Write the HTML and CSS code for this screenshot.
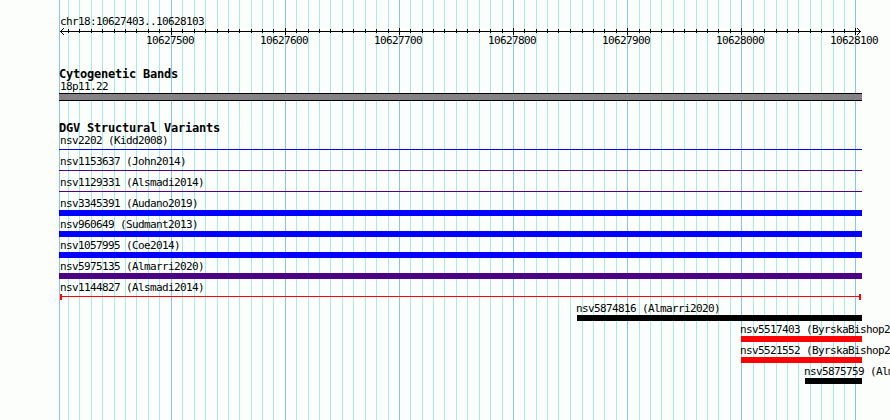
FILE: index.html
```
<!DOCTYPE html>
<html lang="en">
<head>
<meta charset="utf-8">
<title>chr18:10627403..10628103</title>
<link rel="stylesheet" href="styles.css">
</head>
<body>
<main class="browser">
  <svg class="grid" width="890" height="420" shape-rendering="crispEdges" aria-hidden="true">
    <path id="minor" class="grid-minor"/>
    <path id="major" class="grid-major"/>
  </svg>
  <header class="ruler">
    <div class="label">chr18:10627403..10628103</div>
    <svg class="axis" width="890" height="8" shape-rendering="crispEdges" aria-hidden="true">
      <path d="M60 3.5H861"/>
      <path id="ticks"/>
      <path class="arrow" d="M61 2h1v1h-1zM62 1h1v1h-1zM63 0h1v1h-1zM61 4h1v1h-1zM62 5h1v1h-1zM63 6h1v1h-1zM859 2h1v1h-1zM858 1h1v1h-1zM857 0h1v1h-1zM859 4h1v1h-1zM858 5h1v1h-1zM857 6h1v1h-1z"/>
    </svg>
    <div class="scale">
      <span>10627500</span><span>10627600</span><span>10627700</span><span>10627800</span><span>10627900</span><span>10628000</span><span>10628100</span>
    </div>
  </header>
  <section class="track cytoband">
    <h2>Cytogenetic Bands</h2>
    <div class="row"><div class="label">18p11.22</div><div class="band"></div></div>
  </section>
  <section class="track">
    <h2>DGV Structural Variants</h2>
    <div class="row"><div class="label">nsv2202 (Kidd2008)</div><div class="line blue"></div></div>
    <div class="row"><div class="label">nsv1153637 (John2014)</div><div class="line indigo"></div></div>
    <div class="row"><div class="label">nsv1129331 (Alsmadi2014)</div><div class="line indigo"></div></div>
    <div class="row"><div class="label">nsv3345391 (Audano2019)</div><div class="bar blue"></div></div>
    <div class="row"><div class="label">nsv960649 (Sudmant2013)</div><div class="bar blue"></div></div>
    <div class="row"><div class="label">nsv1057995 (Coe2014)</div><div class="bar blue"></div></div>
    <div class="row"><div class="label">nsv5975135 (Almarri2020)</div><div class="bar indigo"></div></div>
    <div class="row"><div class="label">nsv1144827 (Alsmadi2014)</div><div class="span"></div></div>
    <div class="row from-577"><div class="label">nsv5874816 (Almarri2020)</div><div class="bar black"></div></div>
    <div class="row from-741"><div class="label">nsv5517403 (ByrskaBishop2</div><div class="bar red"></div></div>
    <div class="row from-741"><div class="label">nsv5521552 (ByrskaBishop2</div><div class="bar red"></div></div>
    <div class="row from-805"><div class="label">nsv5875759 (Alm</div><div class="bar black"></div></div>
  </section>
</main>
<script src="grid.js"></script>
</body>
</html>
```
FILE: styles.css
```
body {
  margin: 0;
  background: #fcfefc;
  color: #000;
  font: 11px/13px "DejaVu Sans Mono", monospace;
  letter-spacing: -0.622px;
}
.browser {
  position: relative;
  width: 890px;
  height: 420px;
  overflow: hidden;
}
.grid { position: absolute; top: 0; left: 0; z-index: -1; }
.grid path, .axis path { fill: none; stroke-width: 1; }
.grid .grid-minor { stroke: #a9ebe9; }
.grid .grid-major { stroke: #84c8e4; }
.ruler { height: 52px; padding-top: 15px; }
.ruler .label { padding-left: 60px; }
.axis { display: block; }
.axis path { stroke: #000; }
.axis .arrow { fill: #000; stroke: none; }
.scale {
  display: grid;
  grid-template-columns: repeat(7, 114px);
  margin: -2px 0 0 146px;
}
.label { height: 13px; white-space: pre; }
.track { padding-left: 59px; }
.cytoband { height: 54px; }
h2 {
  height: 13px;
  margin: 0;
  font-size: 12px;
  line-height: 14px;
  letter-spacing: -0.224px;
}
.row { width: 803px; height: 21px; }
.row .label { padding-left: 1px; }
.row[class*="from-"] .label { padding-left: 0; margin-left: -1px; }
.from-577 { width: 285px; margin-left: 518px; }
.from-741 { width: 121px; margin-left: 682px; }
.from-805 { width: 57px; margin-left: 746px; }
.band {
  box-sizing: border-box;
  height: 8px;
  background: #848284;
  border: solid #000;
  border-width: 1px 0;
}
.bar { height: 6px; }
.line { height: 1px; margin-top: 2px; }
.blue { background: #0000fc; }
.indigo { background: #4c0284; }
.black { background: #000; }
.red { background: #fc0204; }
.span {
  box-sizing: border-box;
  width: 801px;
  height: 6px;
  margin-left: 1px;
  border: solid #fc0204;
  border-width: 0 2px;
  background: linear-gradient(#fc0204, #fc0204) 0 2px / 100% 1px no-repeat;
}
```
FILE: grid.js
```
const major = [171, 285, 399, 513, 627, 741, 855];
const minor = [68, 79, 91, 102, 114, 125, 136, 148, 159,
  182, 194, 205, 217, 228, 239, 251, 262, 273,
  296, 308, 319, 330, 342, 353, 365, 376, 388,
  410, 422, 433, 444, 456, 467, 479, 490, 502,
  524, 536, 547, 558, 570, 582, 593, 604, 616,
  639, 650, 661, 673, 684, 696, 707, 718, 730,
  753, 764, 776, 787, 798, 810, 821, 833, 844];
const lines = (xs, y, h) => xs.map(x => `M${x + 0.5} ${y}v${h}`).join("");
document.getElementById("minor").setAttribute("d", lines(minor, 0, 420));
document.getElementById("major").setAttribute("d", lines([59, ...major], 0, 420));
document.getElementById("ticks").setAttribute("d", lines(minor, 1, 4) + lines(major, 0, 7));
```
